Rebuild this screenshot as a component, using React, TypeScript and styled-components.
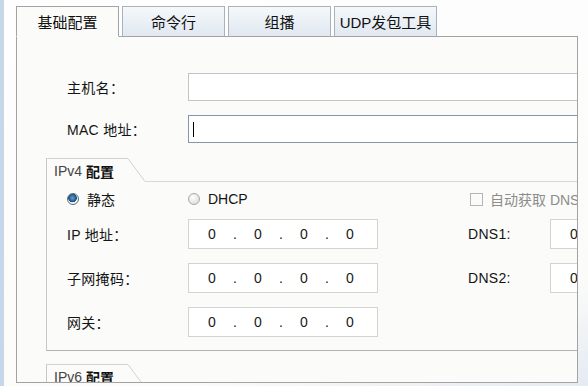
import React from "react";
import styled, { createGlobalStyle } from "styled-components";

const GlobalStyle = createGlobalStyle`
    html, body {
        margin: 0;
        padding: 0;
        background: #fdfdfc;
    }
    body {
        font-family: "Liberation Sans", "Noto Sans CJK SC", sans-serif;
        font-size: 14px;
        color: #141414;
    }
`;

const tabs = ["基础配置", "命令行", "组播", "UDP发包工具"];

function IpField() {
    return (
        <IpBox>
            <Octet>0</Octet>
            <Dot>.</Dot>
            <Octet>0</Octet>
            <Dot>.</Dot>
            <Octet>0</Octet>
            <Dot>.</Dot>
            <Octet>0</Octet>
        </IpBox>
    );
}

// DNS field runs past the panel edge; only its first octet is visible
function EdgeIpField() {
    return (
        <IpBox $edge>
            <Octet>0</Octet>
        </IpBox>
    );
}

function GroupHeader({ title }: { title: React.ReactNode }) {
    return (
        <Header>
            <Legend>{title}</Legend>
            <Slant width="17" height="24" viewBox="0 0 17 24">
                <line x1="0" y1="0.5" x2="17" y2="23.5" stroke="#d2d2d2" strokeWidth="1" />
            </Slant>
            <HeaderFill />
        </Header>
    );
}

export default function App() {
    return (
        <>
            <GlobalStyle />
            <Window>
                <Content>
                    <TabBar>
                        {tabs.map((t, i) => (
                            <Tab key={t} $active={i === 0}>
                                {t}
                            </Tab>
                        ))}
                    </TabBar>
                    <Panel>
                        <TopForm>
                            <FormRow>
                                <Label>主机名：</Label>
                                <TextInput />
                            </FormRow>
                            <FormRow>
                                <Label>MAC 地址：</Label>
                                <TextInput $focused>
                                    <Caret />
                                </TextInput>
                            </FormRow>
                        </TopForm>

                        <Group>
                            <GroupHeader
                                title={
                                    <>
                                        IPv4 <b>配置</b>
                                    </>
                                }
                            />
                            <GroupBody>
                                <RadioRow>
                                    <Choice>
                                        <Radio $checked />
                                        <span>静态</span>
                                    </Choice>
                                    <Choice>
                                        <Radio />
                                        <span>DHCP</span>
                                    </Choice>
                                    <span />
                                    <Choice $disabled>
                                        <CheckBox />
                                        <span>自动获取 DNS</span>
                                    </Choice>
                                </RadioRow>
                                <IpRow>
                                    <Label>IP 地址：</Label>
                                    <IpField />
                                    <span />
                                    <Label>DNS1:</Label>
                                    <EdgeIpField />
                                </IpRow>
                                <IpRow>
                                    <Label>子网掩码：</Label>
                                    <IpField />
                                    <span />
                                    <Label>DNS2:</Label>
                                    <EdgeIpField />
                                </IpRow>
                                <IpRow>
                                    <Label>网关：</Label>
                                    <IpField />
                                </IpRow>
                            </GroupBody>
                        </Group>

                        <Group $next>
                            <GroupHeader
                                title={
                                    <>
                                        IPv6 <b>配置</b>
                                    </>
                                }
                            />
                        </Group>
                    </Panel>
                </Content>
            </Window>
        </>
    );
}

const Window = styled.div`
    width: 588px;
    height: 386px;
    display: flex;
    overflow: hidden;
    border-left: 4px solid #c6d7ea;
    box-sizing: border-box;
    background: linear-gradient(165deg, #fefefe 0%, #fbfbfa 80%, #e4ebf2 100%);
`;

const Content = styled.div`
    flex: none;
    width: 574px;
    display: flex;
    flex-direction: column;
    align-items: flex-start;
    padding: 6px 0 0 12px;
    box-sizing: border-box;
`;

const TabBar = styled.div`
    display: flex;
    gap: 3px;
    position: relative;
    z-index: 1;
    margin-bottom: -1px;
`;

const Tab = styled.div<{ $active?: boolean }>`
    width: 103px;
    height: 31px;
    box-sizing: border-box;
    display: flex;
    align-items: center;
    justify-content: center;
    font-size: 15px;
    color: #111;
    border: 1px solid ${(p) => (p.$active ? "#a3a3a3" : "#a9b1ba")};
    border-bottom: 1px solid ${(p) => (p.$active ? "#fbfbf9" : "#a3a3a3")};
    background: ${(p) =>
        p.$active
            ? "#fbfbf9"
            : "linear-gradient(180deg, #f6f8fb 0%, #e9eff5 55%, #e1e8f0 100%)"};
`;

const Panel = styled.div`
    flex: none;
    width: 562px;
    height: 347px;
    box-sizing: border-box;
    border: 1px solid #a3a3a3;
    background: #fbfbf9;
    overflow: hidden;
    padding: 36px 0 0 29px;
`;

const TopForm = styled.div`
    display: flex;
    flex-direction: column;
    gap: 14px;
    padding-left: 21px;
`;

const FormRow = styled.div`
    display: grid;
    grid-template-columns: 121px 390px;
    align-items: center;
    height: 28px;
`;

const Label = styled.span`
    font-size: 14px;
    white-space: nowrap;
    color: #141414;
    letter-spacing: 0.3px;
`;

const TextInput = styled.div<{ $focused?: boolean }>`
    height: 28px;
    box-sizing: border-box;
    border: 1px solid ${(p) => (p.$focused ? "#7f98ad" : "#c4c4c4")};
    background: #ffffff;
    display: flex;
    align-items: center;
    padding-left: 4px;
`;

const Caret = styled.span`
    width: 1px;
    height: 15px;
    background: #000;
`;

const Group = styled.div<{ $next?: boolean }>`
    width: 560px;
    margin-top: ${(p) => (p.$next ? "13px" : "15px")};
`;

const Header = styled.div`
    display: flex;
    height: 24px;
`;

const Legend = styled.div`
    width: 82px;
    box-sizing: border-box;
    border-top: 1px solid #d2d2d2;
    border-left: 1px solid #c8c8c8;
    padding-left: 7px;
    display: flex;
    align-items: center;
    font-size: 14px;
    color: #444;
    white-space: nowrap;

    b {
        color: #111;
        margin-left: 4px;
    }
`;

const Slant = styled.svg`
    display: block;
    flex: none;
`;

const HeaderFill = styled.div`
    flex: 1;
    border-bottom: 1px solid #d8d8d8;
`;

const GroupBody = styled.div`
    border-left: 1px solid #c8c8c8;
    border-right: 1px solid #c8c8c8;
    border-bottom: 1px solid #b4b4b4;
    padding: 7px 0 13px 20px;
    display: flex;
    flex-direction: column;
`;

const Grid = styled.div`
    display: grid;
    grid-template-columns: 121px 190px 90px 82px 60px;
    align-items: center;
`;

const RadioRow = styled(Grid)`
    height: 18px;
    margin-bottom: 12px;
`;

const IpRow = styled(Grid)`
    height: 30px;
    & + & {
        margin-top: 14px;
    }
`;

const Choice = styled.label<{ $disabled?: boolean }>`
    display: flex;
    align-items: center;
    gap: ${(p) => (p.$disabled ? "7px" : "8px")};
    margin-left: ${(p) => (p.$disabled ? "2px" : "0")};
    font-size: 14px;
    white-space: nowrap;
    color: ${(p) => (p.$disabled ? "#8c8c8c" : "#141414")};
`;

const Radio = styled.span<{ $checked?: boolean }>`
    flex: none;
    width: 12px;
    height: 12px;
    border-radius: 50%;
    box-sizing: border-box;
    border: 1px solid ${(p) => (p.$checked ? "#5a6d80" : "#a9a9a9")};
    background: ${(p) =>
        p.$checked
            ? "radial-gradient(circle at 45% 40%, #6aa0cf 0%, #235f93 40%, #1d4f7c 50%, #f4f6f8 56%, #e6e9ec 100%)"
            : "radial-gradient(circle at 40% 35%, #ffffff 0%, #eaeaea 50%, #d6d6d6 100%)"};
`;

const CheckBox = styled.span`
    flex: none;
    width: 13px;
    height: 13px;
    box-sizing: border-box;
    border: 1px solid #b5b5b5;
    background: #fbfbfb;
`;

const IpBox = styled.div<{ $edge?: boolean }>`
    flex: none;
    width: ${(p) => (p.$edge ? "40px" : "190px")};
    height: 30px;
    box-sizing: border-box;
    border: 1px solid #d3d3d3;
    ${(p) => (p.$edge ? "border-right: none;" : "")}
    background: #ffffff;
    display: flex;
    align-items: center;
    padding-left: 5px;
    font-size: 14px;
    color: #1a1a1a;
`;

const Octet = styled.span`
    flex: none;
    width: 36px;
    text-align: center;
`;

const Dot = styled.span`
    flex: none;
    width: 10px;
    text-align: center;
`;
